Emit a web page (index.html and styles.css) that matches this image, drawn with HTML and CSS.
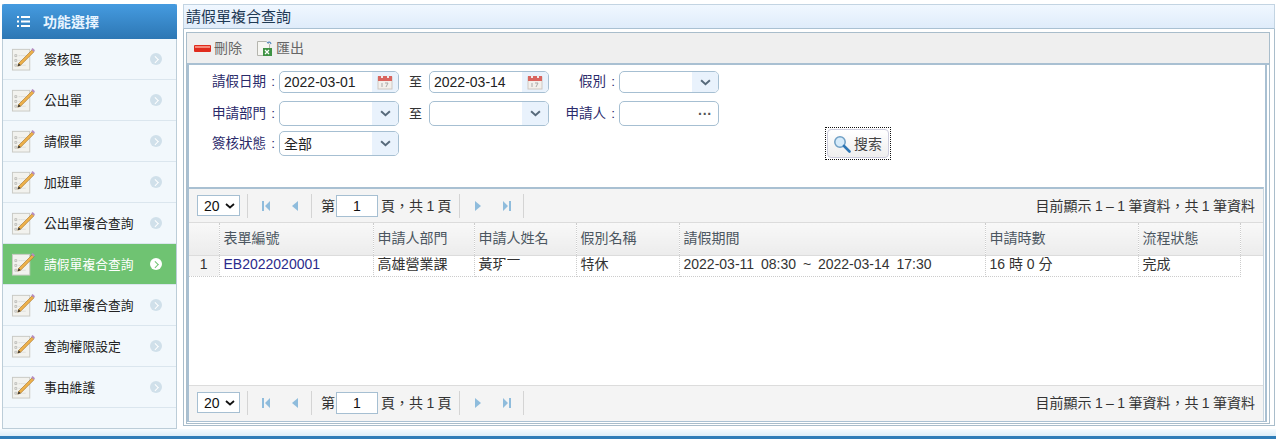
FILE: index.html
```html
<!DOCTYPE html>
<html lang="zh-Hant">
<head>
    <meta charset="UTF-8">
    <title>請假單複合查詢</title>
    <link rel="stylesheet" href="styles.css">
</head>
<body>
    <svg class="defs" width="0" height="0">
        <symbol id="note" viewBox="0 0 26 26">
            <rect x="1.5" y="3.5" width="18" height="21.500" fill="#f2f2ee" stroke="#c9c9c4"/>
            <path d="M4 9h2v2H4zM4 14h2v2H4zM4 19h2v2H4z" fill="none" stroke="#b5b5b0" stroke-width=".8"/>
            <path d="M8 10h8M8 15h8M8 20h8" stroke="#cfcfca" stroke-dasharray="1 1"/>
            <path d="M8 18l14-14 2 2-14 14-3 1z" fill="#eeb14a" stroke="#a06f28" stroke-width=".6"/>
            <path d="M21 3.500l1.500-1.500 2.500 2.500-1.500 1.500z" fill="#b58cc0"/>
            <path d="M7 21l1-3 2 2z" fill="#333"/>
        </symbol>
        <symbol id="cal" viewBox="0 0 16 16">
            <rect x="1" y="3" width="14" height="12" fill="#f3f0ec" stroke="#cfc8c2"/>
            <rect x="1" y="2" width="14" height="5" fill="#d9655f"/>
            <rect x="4" y="1" width="2" height="3" fill="#eee"/>
            <rect x="10" y="1" width="2" height="3" fill="#eee"/>
            <path d="M5 9v4M8 9h3l-2 4" fill="none" stroke="#aaa"/>
        </symbol>
        <symbol id="chev" viewBox="0 0 10 6">
            <path d="M1 1l4 3.500L9 1" fill="none" stroke="#56697a" stroke-width="1.800"/>
        </symbol>
        <symbol id="pgchev" viewBox="0 0 10 6">
            <path d="M1 1l4 3.500L9 1" fill="none" stroke="#111" stroke-width="1.800"/>
        </symbol>
        <symbol id="first" viewBox="0 0 10 12">
            <path d="M1 1h2v10H1zM9 1v10L4 6z" fill="#8fbcdc"/>
        </symbol>
        <symbol id="prev" viewBox="0 0 10 12">
            <path d="M8 1v10L2 6z" fill="#8fbcdc"/>
        </symbol>
        <symbol id="next" viewBox="0 0 10 12">
            <path d="M2 1v10l6-5z" fill="#8fbcdc"/>
        </symbol>
        <symbol id="last" viewBox="0 0 10 12">
            <path d="M7 1h2v10H7zM1 1v10l5-5z" fill="#8fbcdc"/>
        </symbol>
    </svg>

    <div class="layout">
        <aside class="sidebar">
            <div class="side-head">
                <svg class="list-icon" width="13" height="11" viewBox="0 0 13 11"><path d="M0 0h2v2H0zM4 0h9v2H4zM0 4.500h2v2H0zM4 4.500h9v2H4zM0 9h2v2H0zM4 9h9v2H4z" fill="#fff"/></svg>
                <span>功能選擇</span>
            </div>
            <ul class="menu">
                <li><svg class="note"><use href="#note"/></svg><span class="label">簽核區</span><i class="arrow"></i></li>
                <li><svg class="note"><use href="#note"/></svg><span class="label">公出單</span><i class="arrow"></i></li>
                <li><svg class="note"><use href="#note"/></svg><span class="label">請假單</span><i class="arrow"></i></li>
                <li><svg class="note"><use href="#note"/></svg><span class="label">加班單</span><i class="arrow"></i></li>
                <li><svg class="note"><use href="#note"/></svg><span class="label">公出單複合查詢</span><i class="arrow"></i></li>
                <li class="active"><svg class="note"><use href="#note"/></svg><span class="label">請假單複合查詢</span><i class="arrow"></i></li>
                <li><svg class="note"><use href="#note"/></svg><span class="label">加班單複合查詢</span><i class="arrow"></i></li>
                <li><svg class="note"><use href="#note"/></svg><span class="label">查詢權限設定</span><i class="arrow"></i></li>
                <li><svg class="note"><use href="#note"/></svg><span class="label">事由維護</span><i class="arrow"></i></li>
            </ul>
        </aside>

        <main class="panel">
            <div class="panel-title">請假單複合查詢</div>
            <div class="panel-body">
                <div class="inner">
                    <div class="toolbar">
                        <span class="tool">
                            <svg width="17" height="7" viewBox="0 0 17 7"><rect width="17" height="7" rx="1" fill="#e02b1d"/><rect x="1" y="1" width="15" height="2" fill="#f58a7a"/></svg>
                            <span class="tool-text">刪除</span>
                        </span>
                        <span class="tool">
                            <svg width="17" height="17" viewBox="0 0 17 17"><path d="M1.500 1.500h9l3 3v11h-12z" fill="#f6f6f2" stroke="#b5b5ae"/><rect x="7" y="8" width="9" height="8" fill="#3f9344"/><path d="M9 10l4 4M13 10l-4 4" stroke="#fff" stroke-width="1.300"/><path d="M11 3c2-1.500 3.500-1 4 1" fill="none" stroke="#5a8cc0" stroke-width="1.200"/></svg>
                            <span class="tool-text">匯出</span>
                        </span>
                    </div>

                    <div class="box">
                        <form class="search">
                            <div class="fields">
                                <label class="lbl">請假日期 :</label>
                                <div class="combo short"><span class="val">2022-03-01</span><span class="btn"><svg width="16" height="16"><use href="#cal"/></svg></span></div>
                                <label class="to">至</label>
                                <div class="combo short"><span class="val">2022-03-14</span><span class="btn"><svg width="16" height="16"><use href="#cal"/></svg></span></div>
                                <label class="lbl">假別 :</label>
                                <div class="combo short"><span class="val"></span><span class="btn"><svg width="11" height="7"><use href="#chev"/></svg></span></div>

                                <label class="lbl tall">申請部門 :</label>
                                <div class="combo"><span class="val"></span><span class="btn"><svg width="11" height="7"><use href="#chev"/></svg></span></div>
                                <label class="to tall">至</label>
                                <div class="combo"><span class="val"></span><span class="btn"><svg width="11" height="7"><use href="#chev"/></svg></span></div>
                                <label class="lbl tall">申請人 :</label>
                                <div class="combo"><span class="val"></span><span class="dots">···</span></div>

                                <label class="lbl tall">簽核狀態 :</label>
                                <div class="combo"><span class="val raised">全部</span><span class="btn"><svg width="11" height="7"><use href="#chev"/></svg></span></div>
                            </div>
                            <div class="search-btn">
                                <button type="button">
                                    <svg width="18" height="18" viewBox="0 0 18 18"><circle cx="7" cy="7" r="5.200" fill="#d6ebfa" stroke="#6f9fc4" stroke-width="1.500"/><path d="M11 11l5.500 5.500" stroke="#2f77b5" stroke-width="2.600" stroke-linecap="round"/></svg>
                                    <span class="tool-text">搜索</span>
                                </button>
                            </div>
                        </form>

                        <div class="grid">
                            <div class="pager">
                                <div class="pg-left">
                                    <div class="size">20<svg width="10" height="6"><use href="#pgchev"/></svg></div>
                                    <i class="sep"></i>
                                    <svg class="pg-i" width="10" height="12"><use href="#first"/></svg>
                                    <svg class="pg-i" width="10" height="12"><use href="#prev"/></svg>
                                    <i class="sep"></i>
                                    <span class="pg-text pg-first">第</span><span class="page-no">1</span><span class="pg-text">頁，共 1 頁</span>
                                    <i class="sep"></i>
                                    <svg class="pg-i" width="10" height="12"><use href="#next"/></svg>
                                    <svg class="pg-i" width="10" height="12"><use href="#last"/></svg>
                                    <i class="sep"></i>
                                </div>
                                <span class="pg-text">目前顯示 1 – 1 筆資料，共 1 筆資料</span>
                            </div>

                            <div class="table-wrap">
                                <table>
                                    <thead>
                                        <tr><th class="c0"></th><th class="c1">表單編號</th><th class="c2">申請人部門</th><th class="c3">申請人姓名</th><th class="c4">假別名稱</th><th class="c5">請假期間</th><th class="c6">申請時數</th><th class="c7">流程狀態</th><th class="c8"></th></tr>
                                    </thead>
                                    <tbody>
                                        <tr><td class="num">1</td><td class="link">EB2022020001</td><td>高雄營業課</td><td><span class="name">黃玥丁</span></td><td>特休</td><td class="period">2022-03-11 08:30 ~ 2022-03-14 17:30</td><td>16 時 0 分</td><td>完成</td></tr>
                                    </tbody>
                                </table>
                            </div>

                            <div class="pager bottom">
                                <div class="pg-left">
                                    <div class="size">20<svg width="10" height="6"><use href="#pgchev"/></svg></div>
                                    <i class="sep"></i>
                                    <svg class="pg-i" width="10" height="12"><use href="#first"/></svg>
                                    <svg class="pg-i" width="10" height="12"><use href="#prev"/></svg>
                                    <i class="sep"></i>
                                    <span class="pg-text pg-first">第</span><span class="page-no">1</span><span class="pg-text">頁，共 1 頁</span>
                                    <i class="sep"></i>
                                    <svg class="pg-i" width="10" height="12"><use href="#next"/></svg>
                                    <svg class="pg-i" width="10" height="12"><use href="#last"/></svg>
                                    <i class="sep"></i>
                                </div>
                                <span class="pg-text">目前顯示 1 – 1 筆資料，共 1 筆資料</span>
                            </div>
                        </div>
                    </div>
                </div>
            </div>
        </main>
    </div>
    <div class="bottom-bar"></div>
</body>
</html>
```

FILE: styles.css
```css
html, body {
    margin: 0;
    height: 439px;
    overflow: hidden;
}

body {
    font-family: "Liberation Sans", "Noto Sans CJK TC", sans-serif;
    font-size: 14px;
    color: #333;
    background: #fff;
    position: relative;
}

.defs {
    display: block;
    height: 0;
}

.layout {
    display: flex;
    align-items: flex-start;
    padding: 4px 0 0 2px;
    gap: 6px;
}

/* sidebar */
.sidebar {
    width: 175px;
    height: 425px;
    box-sizing: border-box;
    border: 1px solid #bccdd8;
    border-top: none;
    background: #f2f8fc;
    flex: none;
}

.side-head {
    height: 35px;
    margin: 0 -1px;
    background: linear-gradient(#459be0, #2d77b4);
    color: #e8f4ff;
    font-weight: bold;
    display: flex;
    align-items: center;
    border-radius: 2px 2px 0 0;
}

.side-head span {
    margin-left: 13px;
    padding-bottom: 2px;
}

.list-icon {
    margin-left: 15px;
}

.menu {
    list-style: none;
    margin: 0;
    padding: 0;
}

.menu li {
    height: 40px;
    border-bottom: 1px solid #dbe6ee;
    display: flex;
    align-items: center;
    color: #222;
}

.note {
    width: 25px;
    height: 25px;
    margin: -1px 0 0 8px;
    flex: none;
}

.label {
    margin-left: 8px;
    padding-bottom: 2px;
    flex: 1;
    font-size: 12.8px;
}

.arrow {
    width: 12px;
    height: 12px;
    margin-right: 14px;
    border-radius: 50%;
    background: #d0e0ea;
    position: relative;
}

.arrow::after {
    content: "";
    position: absolute;
    left: 2.500px;
    top: 3.500px;
    width: 3.500px;
    height: 3.500px;
    border-top: 1.500px solid #fff;
    border-right: 1.500px solid #fff;
    transform: rotate(45deg);
}

.menu li.active {
    background: #6fc372;
    color: #fff;
}

.menu li.active .arrow {
    background: #fff;
}

.menu li.active .arrow::after {
    border-color: #6fc372;
}

/* main panel */
.panel {
    width: 1092px;
    height: 422px;
    flex: none;
    display: flex;
    flex-direction: column;
}

.panel-title {
    height: 25px;
    box-sizing: border-box;
    border: 1px solid #c3d4e2;
    border-bottom: 1px solid #a9c0d2;
    background: linear-gradient(#f0f7ff, #dfecfa);
    color: #1f3a55;
    font-size: 15px;
    line-height: 24px;
    padding-left: 2px;
}

.panel-body {
    flex: 1;
    min-height: 0;
    border: 1px solid #a9bdcb;
    border-top: none;
    padding: 3px 4px 1px 2px;
    display: flex;
}

.inner {
    flex: 1;
    min-width: 0;
    border: 1px solid #a9bdcb;
    padding-bottom: 1px;
    display: flex;
    flex-direction: column;
}

.toolbar {
    height: 32px;
    box-sizing: border-box;
    background: #efefef;
    border-bottom: 2px solid #a9c0d2;
    display: flex;
    align-items: center;
    gap: 14px;
    padding-left: 7px;
    color: #666;
    flex: none;
}

.tool {
    display: flex;
    align-items: center;
    gap: 3px;
}

.tool-text {
    padding-bottom: 2px;
}

.box {
    flex: 1;
    min-height: 0;
    margin-right: 2px;
    border: 2px solid #a9c0d2;
    border-width: 0 2px 1px;
    display: flex;
    flex-direction: column;
}

/* search form */
.search {
    height: 122px;
    position: relative;
    flex: none;
    box-sizing: border-box;
    padding-top: 6px;
    background: #fff;
}

.fields {
    display: grid;
    grid-template-columns: 90px 120px 30px 120px 70px 100px;
    grid-template-rows: 30px 30px 25px;
    align-items: start;
}

.lbl {
    text-align: right;
    color: #2a2a6a;
    font-size: 13.500px;
    line-height: 22px;
    padding-right: 4px;
    word-spacing: 1.500px;
    white-space: nowrap;
}

.to {
    text-align: center;
    line-height: 22px;
    padding-left: 3px;
    font-size: 13px;
}

.tall {
    line-height: 25px;
}

.combo {
    height: 25px;
    box-sizing: border-box;
    border: 1px solid #a6bfd2;
    border-radius: 5px;
    display: flex;
    align-items: center;
    overflow: hidden;
    background: #fff;
}

.combo.short {
    height: 22px;
}

.val {
    flex: 1;
    padding-left: 4px;
    color: #222;
}

.val.raised {
    padding-bottom: 2px;
}

.btn {
    width: 26px;
    height: 100%;
    background: #e9f2fc;
    display: flex;
    align-items: center;
    justify-content: center;
}

.dots {
    width: 26px;
    text-align: center;
    color: #555;
    font-weight: bold;
}

.search-btn {
    position: absolute;
    left: 636px;
    top: 62px;
    border: 1px dotted #111;
    padding: 1px;
}

.search-btn button {
    width: 62px;
    height: 29px;
    display: flex;
    align-items: center;
    gap: 3px;
    padding: 0 0 0 5px;
    border: 1px solid #ccd;
    border-radius: 4px;
    background: linear-gradient(#fff, #eee);
    color: #444;
    font: inherit;
}

/* grid */
.grid {
    flex: 1;
    min-height: 0;
    margin-right: 1px;
    border-top: 2px solid #a9c0d2;
    border-right: 1px solid #c8d6e0;
    display: flex;
    flex-direction: column;
    background: #fff;
}

.pager {
    height: 34px;
    box-sizing: border-box;
    background: #f4f4f4;
    border-bottom: 1px solid #dcdcdc;
    display: flex;
    align-items: center;
    justify-content: space-between;
    padding: 0 8px;
    color: #333;
    flex: none;
}

.pager.bottom {
    height: 36px;
    border-top: 1px solid #dcdcdc;
    border-bottom: none;
    padding-bottom: 2px;
}

.pg-left {
    display: flex;
    align-items: center;
}

.pg-text {
    padding-bottom: 2px;
    word-spacing: -0.500px;
}

.size {
    width: 43px;
    height: 21px;
    box-sizing: border-box;
    border: 1px solid #a6bfd2;
    background: #fff;
    display: flex;
    align-items: center;
    justify-content: space-between;
    padding: 0 4px 0 6px;
    color: #111;
}

.sep {
    width: 1px;
    height: 24px;
    background: #d4d4d4;
    margin: 0 7px;
}

.pg-i {
    margin: 0 4px 0 6px;
}

.pg-i + .pg-i {
    margin-left: 15px;
}

.pg-first {
    margin-left: 2px;
}

.page-no {
    width: 42px;
    height: 22px;
    box-sizing: border-box;
    border: 1px solid #a6bfd2;
    background: #fff;
    text-align: center;
    line-height: 20px;
    margin: 0 3px 0 1px;
    color: #111;
}

.table-wrap {
    flex: 1;
    min-height: 0;
    background: #fff;
    overflow: hidden;
}

table {
    border-collapse: collapse;
    table-layout: fixed;
    width: 100%;
}

th, td {
    box-sizing: border-box;
    border: 1px dotted #ccc;
    text-align: left;
    font-weight: normal;
    line-height: 16px;
    padding: 0 4px 4px;
    white-space: nowrap;
    overflow: hidden;
}

th {
    height: 32px;
    padding-bottom: 1px;
    background: linear-gradient(#f8f8f8, #ececec);
    border-top: none;
    border-bottom: 1px solid #dcdcdc;
    color: #4b5660;
}

td {
    height: 20px;
    color: #333;
}

th.c0, .num {
    border-left: none;
}

th.c8 {
    border-right: none;
}

.num {
    text-align: center;
    background: #f4f4f4;
    padding: 0 0 4px;
}

.link {
    color: #2b2b8c;
}

.period {
    word-spacing: 3px;
}

.name {
    position: relative;
    display: inline-block;
}

/* the name is blanked out on the original */
.name::after {
    content: "";
    position: absolute;
    left: 23px;
    top: 4px;
    width: 20px;
    height: 16px;
    background: #fff;
}

.c0 { width: 30px; padding: 0; }
.c1 { width: 154px; }
.c2 { width: 101px; }
.c3 { width: 102px; }
.c4 { width: 103px; }
.c5 { width: 306px; }
.c6 { width: 153px; }
.c7 { width: 102px; }

.bottom-bar {
    position: absolute;
    left: 0;
    right: 0;
    bottom: 0;
    height: 10px;
    background: linear-gradient(#f6fbfe 0, #dcedf8 7px, #2f7db8 7px);
}
```
